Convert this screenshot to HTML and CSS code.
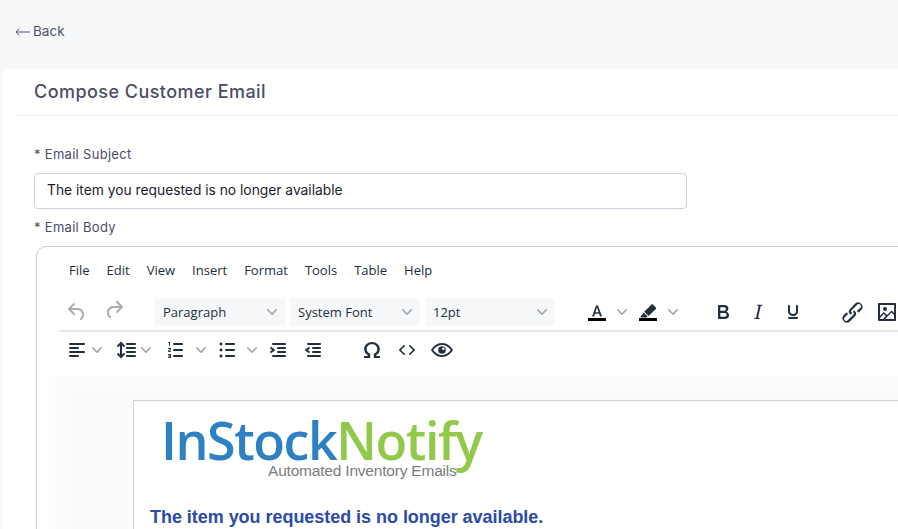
FILE: index.html
```html
<!DOCTYPE html>
<html lang="en">
<head>
	<meta charset="UTF-8">
	<title>Compose Customer Email</title>
	<link rel="stylesheet" href="styles.css">
</head>
<body>
	<div class="TopBar">
		<a class="BackLink" href="#">
			<svg class="BackArrow" width="15" height="8" viewBox="0 0 15 8"><path d="M4 .8 1 4l3 3.2M1 4h14" fill="none" stroke="currentColor"/></svg>
			<span>Back</span>
		</a>
	</div>
	<div class="Card">
		<div class="CardHeader">Compose Customer Email</div>
		<div class="CardBody">
			<label class="FieldLabel FieldLabelFirst">* Email Subject</label>
			<input class="TextInput" type="text" value="The item you requested is no longer available">
			<label class="FieldLabel">* Email Body</label>
			<div class="Editor">
				<div class="MenuBar">
					<span class="MenuItem">File</span>
					<span class="MenuItem">Edit</span>
					<span class="MenuItem">View</span>
					<span class="MenuItem">Insert</span>
					<span class="MenuItem">Format</span>
					<span class="MenuItem">Tools</span>
					<span class="MenuItem">Table</span>
					<span class="MenuItem">Help</span>
				</div>
				<div class="ToolRow ToolRowFirst">
					<div class="ToolGroup ToolGroupHistory">
						<span class="ToolBtn ToolBtnOff"><svg width="24" height="24" viewBox="0 0 24 24"><path d="M6.4 8H12c3.7 0 6.2 2 6.8 5.1.6 2.7-.4 5.6-2.3 6.8a1 1 0 0 1-1-1.8c1.1-.6 1.8-2.7 1.4-4.6-.5-2.1-2.1-3.5-4.9-3.5H6.4l3.3 3.3a1 1 0 1 1-1.4 1.4l-5-5a1 1 0 0 1 0-1.4l5-5a1 1 0 0 1 1.4 1.4L6.4 8z"/></svg></span>
						<span class="ToolBtn ToolBtnOff"><svg width="24" height="24" viewBox="0 0 24 24"><path d="M17.6 10H12c-2.8 0-4.4 1.4-4.9 3.5-.4 2 .3 4 1.4 4.6a1 1 0 1 1-1 1.8c-2-1.2-2.9-4.1-2.3-6.8.6-3 3-5.1 6.8-5.1h5.6l-3.3-3.3a1 1 0 1 1 1.4-1.4l5 5a1 1 0 0 1 0 1.4l-5 5a1 1 0 0 1-1.4-1.4l3.3-3.3z" transform="translate(0 -2)"/></svg></span>
					</div>
					<div class="ToolGroup ToolGroupSelects">
						<div class="Select"><span>Paragraph</span><svg class="Chevron" width="10" height="10" viewBox="0 0 10 10"><path d="M8.7 2.2c.3-.3.8-.3 1 0 .4.4.4.9 0 1.2L5.7 7.8c-.3.3-.9.3-1.2 0L.2 3.4a.8.8 0 0 1 0-1.2c.3-.3.8-.3 1.1 0L5 6l3.7-3.8z"/></svg></div>
						<div class="Select"><span>System Font</span><svg class="Chevron" width="10" height="10" viewBox="0 0 10 10"><path d="M8.7 2.2c.3-.3.8-.3 1 0 .4.4.4.9 0 1.2L5.7 7.8c-.3.3-.9.3-1.2 0L.2 3.4a.8.8 0 0 1 0-1.2c.3-.3.8-.3 1.1 0L5 6l3.7-3.8z"/></svg></div>
						<div class="Select"><span>12pt</span><svg class="Chevron" width="10" height="10" viewBox="0 0 10 10"><path d="M8.7 2.2c.3-.3.8-.3 1 0 .4.4.4.9 0 1.2L5.7 7.8c-.3.3-.9.3-1.2 0L.2 3.4a.8.8 0 0 1 0-1.2c.3-.3.8-.3 1.1 0L5 6l3.7-3.8z"/></svg></div>
					</div>
					<div class="ToolGroup">
						<span class="ToolBtn"><svg width="24" height="24" viewBox="0 0 24 24"><path d="M7 16.500 11 5.500h2l4 11h-2l-.9-2.700H9.900L9 16.500H7zm3.400-4.300h3.200L12 7.600l-1.600 4.600z"/><path class="Swatch" d="M3 18h18v3H3z"/></svg></span>
						<span class="ToolCaret"><svg class="Chevron" width="10" height="10" viewBox="0 0 10 10"><path d="M8.7 2.2c.3-.3.8-.3 1 0 .4.4.4.9 0 1.2L5.7 7.8c-.3.3-.9.3-1.2 0L.2 3.4a.8.8 0 0 1 0-1.2c.3-.3.8-.3 1.1 0L5 6l3.7-3.8z"/></svg></span>
						<span class="ToolBtn"><svg width="24" height="24" viewBox="0 0 24 24"><path d="M15.500 4.600c.4-.4 1-.4 1.400 0l3 2.900c.4.4.4 1 0 1.400l-7.300 7.100-4.400-4.300 7.300-7.100zM7.600 12.600l4.100 4-1.400.9H5.200l-.9-.9 2.400-2.400.9-1.600z"/><path class="Swatch" d="M3 18h18v3H3z"/></svg></span>
						<span class="ToolCaret"><svg class="Chevron" width="10" height="10" viewBox="0 0 10 10"><path d="M8.7 2.2c.3-.3.8-.3 1 0 .4.4.4.9 0 1.2L5.7 7.8c-.3.3-.9.3-1.2 0L.2 3.4a.8.8 0 0 1 0-1.2c.3-.3.8-.3 1.1 0L5 6l3.7-3.8z"/></svg></span>
					</div>
					<div class="ToolGroup">
						<span class="ToolBtn"><svg width="24" height="24" viewBox="0 0 24 24"><path d="M7.800 19c-.3 0-.5 0-.6-.2l-.2-.5V5.700c0-.2 0-.4.2-.5l.6-.2h5c1.500 0 2.700.3 3.500 1 .7.6 1.100 1.400 1.100 2.500a3 3 0 0 1-.6 1.900c-.4.6-1 1-1.600 1.200.4.1.9.3 1.300.6s.8.7 1 1.200c.4.4.5 1 .5 1.600 0 1.300-.4 2.300-1.300 3-.8.7-2.100 1-3.800 1H7.800zm5-8.300c.6 0 1.200-.1 1.600-.5.4-.3.6-.7.6-1.300 0-1.100-.8-1.700-2.300-1.700H9.300v3.500h3.400zm.5 6c.7 0 1.300-.1 1.700-.4.4-.4.6-.9.6-1.500s-.2-1-.7-1.400c-.4-.3-1-.4-2-.4H9.400v3.800h4z"/></svg></span>
						<span class="ToolBtn"><svg width="24" height="24" viewBox="0 0 24 24"><path d="M16.700 4.700l-.1.9h-.3c-.6 0-1 0-1.400.3-.3.3-.4.6-.5 1.100l-2.100 9.800v.6c0 .5.4.8 1.400.8h.2l-.2.8H8l.2-.8h.2c1.100 0 1.800-.5 2-1.500l2-9.800.1-.5c0-.6-.4-.8-1.400-.8h-.3l.2-.9h5.800z"/></svg></span>
						<span class="ToolBtn"><svg width="24" height="24" viewBox="0 0 24 24"><path d="M16 5c.6 0 1 .4 1 1v5.500a4 4 0 0 1-.4 1.800l-1 1.400a5.300 5.300 0 0 1-5.500 1 5 5 0 0 1-1.600-1c-.5-.4-.8-.9-1.100-1.400a4 4 0 0 1-.4-1.800V6c0-.6.4-1 1-1s1 .4 1 1v5.500c0 .3 0 .6.2 1l.6.7a3.300 3.300 0 0 0 2.200.8 3.400 3.400 0 0 0 2.200-.8c.3-.2.4-.5.6-.8l.2-.9V6c0-.6.4-1 1-1zM8 17h8c.6 0 1 .4 1 1s-.4 1-1 1H8a1 1 0 0 1 0-2z"/></svg></span>
					</div>
					<div class="ToolGroup">
						<span class="ToolBtn"><svg width="27" height="27" viewBox="0 0 24 24"><path d="M6.200 12.300a1 1 0 0 1 1.400 1.400l-2 2a2 2 0 1 0 2.600 2.800l4.800-4.800a1 1 0 0 0 0-1.400 1 1 0 1 1 1.400-1.300 2.900 2.900 0 0 1 0 4L9.600 20a3.900 3.900 0 0 1-5.500-5.500l2-2zm11.600-.6a1 1 0 0 1-1.400-1.400l2-2a2 2 0 1 0-2.600-2.800L11 10.300a1 1 0 0 0 0 1.400A1 1 0 1 1 9.600 13a2.900 2.900 0 0 1 0-4L14.400 4a3.900 3.900 0 0 1 5.500 5.500l-2 2z"/></svg></span>
						<span class="ToolBtn"><svg width="24" height="24" viewBox="0 0 24 24"><path d="M5 15.700l3.300-3.200c.3-.3.7-.3 1 0L12 15l4.100-4c.3-.4.8-.4 1 0l2 1.900V5H5v10.700zM5 18V19h3l2.800-2.900-2-2L5 17.900zm14-3l-2.500-2.400-6.400 6.500H19v-4zM4 3h16c.6 0 1 .4 1 1v16c0 .6-.4 1-1 1H4a1 1 0 0 1-1-1V4c0-.6.4-1 1-1zm6 8a2 2 0 1 0 0-4 2 2 0 0 0 0 4z"/></svg></span>
					</div>
				</div>
				<div class="ToolRow ToolRowSecond">
					<div class="ToolGroup ToolGroupTight">
						<span class="ToolBtn ToolBtnTight"><svg width="24" height="24" viewBox="0 0 24 24"><path d="M5 5h14c.6 0 1 .4 1 1s-.4 1-1 1H5a1 1 0 1 1 0-2zm0 4h8c.6 0 1 .4 1 1s-.4 1-1 1H5a1 1 0 1 1 0-2zm0 8h8c.6 0 1 .4 1 1s-.4 1-1 1H5a1 1 0 0 1 0-2zm0-4h14c.6 0 1 .4 1 1s-.4 1-1 1H5a1 1 0 0 1 0-2z"/></svg></span>
						<span class="ToolCaret ToolCaretTight"><svg class="Chevron" width="10" height="10" viewBox="0 0 10 10"><path d="M8.7 2.2c.3-.3.8-.3 1 0 .4.4.4.9 0 1.2L5.7 7.8c-.3.3-.9.3-1.2 0L.2 3.4a.8.8 0 0 1 0-1.2c.3-.3.8-.3 1.1 0L5 6l3.7-3.8z"/></svg></span>
						<span class="ToolBtn ToolBtnTight ToolBtnGapped"><svg width="24" height="24" viewBox="0 0 24 24"><path d="M21 5a1 1 0 0 1 .1 2H13a1 1 0 0 1-.1-2H21zm0 4a1 1 0 0 1 .1 2H13a1 1 0 0 1-.1-2H21zm0 4a1 1 0 0 1 .1 2H13a1 1 0 0 1-.1-2H21zm0 4a1 1 0 0 1 .1 2H13a1 1 0 0 1-.1-2H21zM7 3.600l3.700 3.700a1 1 0 0 1-1.300 1.500h-.1L8 7.300v9.200l1.300-1.300a1 1 0 0 1 1.300 0h.1c.4.4.4 1 0 1.300v.1L7 20.400l-3.700-3.700a1 1 0 0 1 1.300-1.500h.1L6 16.700V7.400L4.700 8.700a1 1 0 0 1-1.300 0h-.1a1 1 0 0 1 0-1.300v-.1L7 3.600z"/></svg></span>
						<span class="ToolCaret ToolCaretTight"><svg class="Chevron" width="10" height="10" viewBox="0 0 10 10"><path d="M8.7 2.2c.3-.3.8-.3 1 0 .4.4.4.9 0 1.2L5.7 7.8c-.3.3-.9.3-1.2 0L.2 3.4a.8.8 0 0 1 0-1.2c.3-.3.8-.3 1.1 0L5 6l3.7-3.8z"/></svg></span>
					</div>
					<div class="ToolGroup ToolGroupLists">
						<span class="ToolBtn"><svg width="24" height="24" viewBox="0 0 24 24"><path d="M10 17h8c.6 0 1 .4 1 1s-.4 1-1 1h-8a1 1 0 0 1 0-2zm0-6h8c.6 0 1 .4 1 1s-.4 1-1 1h-8a1 1 0 0 1 0-2zm0-6h8c.6 0 1 .4 1 1s-.4 1-1 1h-8a1 1 0 1 1 0-2zM6 4v3.500c0 .3-.2.5-.5.5a.5.5 0 0 1-.5-.5V5h-.5a.5.5 0 0 1 0-1H6zm-1 8.800l.2.2h1.300c.3 0 .5.2.5.5s-.2.5-.5.5H4.900a1 1 0 0 1-.9-1V13c0-.4.3-.8.6-1l1.200-.4.2-.3a.2.2 0 0 0-.2-.2H4.500a.5.5 0 0 1-.5-.5c0-.3.2-.5.5-.5h1.600c.5 0 .9.4.9 1v.1c0 .4-.3.8-.6 1l-1.200.4-.2.3zM7 17v2c0 .6-.4 1-1 1H4.500a.5.5 0 0 1 0-1h1.200c.2 0 .3-.1.3-.3 0-.2-.1-.3-.3-.3H4.400a.4.4 0 1 1 0-.8h1.300c.2 0 .3-.1.3-.3 0-.2-.1-.3-.3-.3H4.500a.5.5 0 1 1 0-1H6c.6 0 1 .4 1 1z"/></svg></span>
						<span class="ToolCaret"><svg class="Chevron" width="10" height="10" viewBox="0 0 10 10"><path d="M8.7 2.2c.3-.3.8-.3 1 0 .4.4.4.9 0 1.2L5.7 7.8c-.3.3-.9.3-1.2 0L.2 3.4a.8.8 0 0 1 0-1.2c.3-.3.8-.3 1.1 0L5 6l3.7-3.8z"/></svg></span>
						<span class="ToolBtn"><svg width="24" height="24" viewBox="0 0 24 24"><path d="M11 5h8c.6 0 1 .4 1 1s-.4 1-1 1h-8a1 1 0 0 1 0-2zm0 6h8c.6 0 1 .4 1 1s-.4 1-1 1h-8a1 1 0 0 1 0-2zm0 6h8c.6 0 1 .4 1 1s-.4 1-1 1h-8a1 1 0 0 1 0-2zM4.500 6c0-.4.1-.8.4-1 .3-.4.7-.5 1.100-.5.4 0 .8.1 1 .4.4.3.5.7.5 1.100 0 .4-.1.8-.4 1-.3.4-.7.5-1.100.5-.4 0-.8-.1-1-.4-.4-.3-.5-.7-.5-1.100zm0 6c0-.4.1-.8.4-1 .3-.4.7-.5 1.100-.5.4 0 .8.1 1 .4.4.3.5.7.5 1.100 0 .4-.1.8-.4 1-.3.4-.7.5-1.100.5-.4 0-.8-.1-1-.4-.4-.3-.5-.7-.5-1.100zm0 6c0-.4.1-.8.4-1 .3-.4.7-.5 1.100-.5.4 0 .8.1 1 .4.4.3.5.7.5 1.100 0 .4-.1.8-.4 1-.3.4-.7.5-1.100.5-.4 0-.8-.1-1-.4-.4-.3-.5-.7-.5-1.100z"/></svg></span>
						<span class="ToolCaret"><svg class="Chevron" width="10" height="10" viewBox="0 0 10 10"><path d="M8.7 2.2c.3-.3.8-.3 1 0 .4.4.4.9 0 1.2L5.7 7.8c-.3.3-.9.3-1.2 0L.2 3.4a.8.8 0 0 1 0-1.2c.3-.3.8-.3 1.1 0L5 6l3.7-3.8z"/></svg></span>
						<span class="ToolBtn"><svg width="24" height="24" viewBox="0 0 24 24"><path d="M7 5h12c.6 0 1 .4 1 1s-.4 1-1 1H7a1 1 0 1 1 0-2zm5 4h7c.6 0 1 .4 1 1s-.4 1-1 1h-7a1 1 0 0 1 0-2zm0 4h7c.6 0 1 .4 1 1s-.4 1-1 1h-7a1 1 0 0 1 0-2zm-5 4h12a1 1 0 0 1 0 2H7a1 1 0 0 1 0-2zm-2.600-3.800L6.200 12l-1.800-1.200a1 1 0 0 1 1.200-1.600l3 2a1 1 0 0 1 0 1.600l-3 2a1 1 0 1 1-1.200-1.600z"/></svg></span>
						<span class="ToolBtn"><svg width="24" height="24" viewBox="0 0 24 24"><path d="M7 5h12c.6 0 1 .4 1 1s-.4 1-1 1H7a1 1 0 1 1 0-2zm5 4h7c.6 0 1 .4 1 1s-.4 1-1 1h-7a1 1 0 0 1 0-2zm0 4h7c.6 0 1 .4 1 1s-.4 1-1 1h-7a1 1 0 0 1 0-2zm-5 4h12a1 1 0 0 1 0 2H7a1 1 0 0 1 0-2zm1.600-3.800a1 1 0 0 1-1.200 1.600l-3-2a1 1 0 0 1 0-1.600l3-2a1 1 0 0 1 1.200 1.600L6.800 12l1.800 1.200z"/></svg></span>
					</div>
					<div class="ToolGroup">
						<span class="ToolBtn"><svg width="24" height="24" viewBox="0 0 24 24"><path d="M12 4c4.300 0 7.800 2.900 7.800 7 0 2.900-1.500 5-3.500 6.100V18H20v2h-6.200v-4.300c2-.6 3.500-2.300 3.500-4.700 0-2.800-2.300-4.800-5.300-4.800S6.700 8.200 6.700 11c0 2.400 1.500 4.100 3.500 4.700V20H4v-2h3.700v-.9C5.700 16 4.200 13.900 4.200 11c0-4.100 3.500-7 7.800-7z"/></svg></span>
						<span class="ToolBtn"><svg width="24" height="24" viewBox="0 0 24 24"><path d="M9.800 15.700c.3.300.3.800 0 1-.3.400-.9.400-1.200 0l-4.400-4.100a.8.800 0 0 1 0-1.200l4.400-4.200c.3-.3.900-.3 1.200 0 .3.300.3.800 0 1.100L6 12l3.800 3.700zM14.200 15.700c-.3.300-.3.800 0 1 .3.400.9.400 1.200 0l4.400-4.100c.3-.3.300-.9 0-1.200l-4.400-4.200a.8.800 0 0 0-1.200 0c-.3.300-.3.800 0 1.100L18 12l-3.800 3.700z"/></svg></span>
						<span class="ToolBtn"><svg width="24" height="24" viewBox="0 0 24 24"><path d="M12 5C7 5 3 8.500 1 12c2 3.500 6 7 11 7s9-3.500 11-7c-2-3.500-6-7-11-7zm0 2c3.900 0 7 2.500 8.700 5-1.700 2.500-4.800 5-8.700 5s-7-2.500-8.700-5C5 9.500 8.100 7 12 7zm0 1.200a3.800 3.800 0 1 0 0 7.600 3.800 3.800 0 0 0 0-7.600zm1.300 1.300a1.200 1.200 0 1 1 0 2.400 1.200 1.200 0 0 1 0-2.400z"/></svg></span>
					</div>
				</div>
				<div class="EditArea">
					<div class="EditInner">
						<div class="Paper">
							<div class="Logo">
								<span class="LogoBlue">InStock</span><span class="LogoGreen">Notify</span>
								<span class="LogoTag">Automated Inventory Emails</span>
							</div>
							<div class="MailHeading">The item you requested is no longer available.</div>
						</div>
					</div>
				</div>
			</div>
		</div>
	</div>
</body>
</html>
```

FILE: styles.css
```css
html, body {
	height: 529px;
	margin: 0;
	overflow: hidden;
}

body {
	background-color: #f7f8fa;
	font-family: "Inter", "Liberation Sans", sans-serif;
	font-size: 14px;
	color: #4d4b66;
}

.TopBar {
	height: 69px;
	padding: 22px 0 0 15px;
	box-sizing: border-box;
}

.BackLink {
	display: flex;
	align-items: center;
	gap: 3px;
	color: #514f6e;
	text-decoration: none;
	font-size: 13.5px;
	line-height: 18px;
}

.BackArrow {
	margin-top: 1px;
}

.Card {
	width: 1000px;
	margin-left: 2px;
	height: 460px;
	background: #fff;
	border-radius: 6px 0 0 0;
}

.CardHeader {
	margin-left: 12px;
	height: 47px;
	padding-left: 20px;
	box-sizing: border-box;
	border-bottom: 1px solid #eff0f2;
	line-height: 45px;
	font-size: 18px;
	font-weight: 500;
	letter-spacing: .45px;
}

.CardBody {
	padding-left: 32px;
}

.FieldLabel {
	display: block;
	font-size: 13px;
	line-height: 18px;
	letter-spacing: .3px;
	color: #4d4b66;
}

.FieldLabelFirst {
	padding-top: 29px;
	padding-bottom: 10px;
}

.TextInput {
	display: block;
	width: 653px;
	height: 36px;
	box-sizing: border-box;
	padding: 0 12px 2px;
	border: 1px solid #cdd3de;
	border-radius: 4px;
	font-family: inherit;
	font-size: 13.8px;
	color: #1c1b2e;
	margin-bottom: 9px;
}

.Editor {
	margin: 10px 0 0 2px;
	width: 960px;
	height: 400px;
	border: 1px solid #ccc;
	border-radius: 10px 0 0 0;
	font-family: "Open Sans", sans-serif;
	color: #222f3e;
}

.MenuBar {
	display: flex;
	height: 46px;
	align-items: center;
	padding-left: 23px;
	font-size: 13px;
}

.MenuItem {
	margin-left: 9px;
	margin-right: 8px;
}

.ToolRow {
	display: flex;
	align-items: center;
	margin-left: 23px;
	box-sizing: border-box;
}

.ToolRowFirst {
	height: 39px;
	padding-top: 1px;
	border-bottom: 2px solid #e6e6e6;
}

.ToolRowSecond {
	height: 36px;
}

.ToolGroup {
	display: flex;
	gap: 1px;
	margin-left: 25px;
	align-items: center;
}

.ToolGroupHistory {
	gap: 3px;
	margin-left: 0;
}

.ToolGroupSelects {
	gap: 5px;
	margin-left: 24px;
}

.ToolGroupTight {
	gap: 0;
	margin-left: 2px;
}

.ToolGroupLists {
	margin-left: 8px;
}

.ToolBtn {
	display: flex;
	width: 34px;
	height: 28px;
	align-items: center;
	justify-content: center;
}

.ToolBtn svg {
	fill: #222f3e;
}

.ToolBtnOff svg {
	fill: #a7acb2;
}

.ToolBtnTight {
	width: 30px;
}

.ToolBtnGapped {
	margin-left: 9px;
}

.ToolCaret {
	display: flex;
	width: 16px;
	height: 28px;
	margin-left: -1px;
	align-items: center;
	justify-content: center;
}

.ToolCaretTight {
	width: 10px;
	margin-left: 0;
}

.Swatch {
	fill: #000;
}

.Chevron {
	fill: #a3a8ae;
}

.Select {
	display: flex;
	width: 130px;
	height: 28px;
	box-sizing: border-box;
	padding: 0 8px;
	justify-content: space-between;
	align-items: center;
	background: #f7f8fa;
	border-radius: 3px;
	font-size: 13px;
}

.EditArea {
	margin: 7px 0 0 12px;
	background: #fcfcfc;
	padding: 15px 0 0 16px;
}

.EditInner {
	background: #fafafa;
	padding: 10px 0 0 68px;
}

.Paper {
	background: #fff;
	border: 1px solid #d2d2d2;
	border-right: 0;
	height: 200px;
}

.Logo {
	position: relative;
	width: 340px;
	margin-left: 27px;
	padding-top: 3px;
	font-family: "Open Sans", sans-serif;
	font-size: 52px;
	font-weight: 600;
	line-height: 71px;
	letter-spacing: -1.45px;
	white-space: nowrap;
}

.LogoBlue {
	color: #2e80c3;
}

.LogoGreen {
	color: #92c94a;
}

.LogoTag {
	position: absolute;
	left: 107px;
	top: 61px;
	font-family: "Liberation Sans", sans-serif;
	font-size: 15.5px;
	font-weight: normal;
	line-height: 18px;
	letter-spacing: -.2px;
	color: #7b7b7b;
}

.MailHeading {
	margin: 31px 0 0 16px;
	font-family: "Liberation Sans", sans-serif;
	font-size: 18px;
	font-weight: bold;
	line-height: 22px;
	letter-spacing: -.04px;
	color: #2a4ba8;
}
```
